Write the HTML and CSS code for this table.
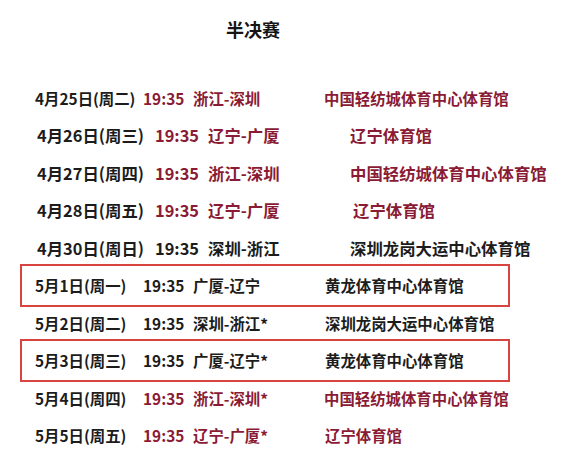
FILE: index.html
```html
<!DOCTYPE html>
<html lang="zh">
<head>
<meta charset="utf-8">
<link rel="stylesheet" href="styles.css">
</head>
<body>
<div class="page">
  <h1 class="title">半决赛</h1>
  <div class="list">
    <div class="row red"><span class="date">4月25日(周二)</span><span class="time">19:35</span><span class="teams">浙江-深圳</span><span class="venue v-r1">中国轻纺城体育中心体育馆</span></div>
    <div class="row wide red"><span class="date">4月26日(周三)</span><span class="time">19:35</span><span class="teams">辽宁-广厦</span><span class="venue">辽宁体育馆</span></div>
    <div class="row wide red"><span class="date">4月27日(周四)</span><span class="time">19:35</span><span class="teams">浙江-深圳</span><span class="venue">中国轻纺城体育中心体育馆</span></div>
    <div class="row wide red"><span class="date">4月28日(周五)</span><span class="time">19:35</span><span class="teams">辽宁-广厦</span><span class="venue v-in">辽宁体育馆</span></div>
    <div class="row wide"><span class="date">4月30日(周日)</span><span class="time">19:35</span><span class="teams">深圳-浙江</span><span class="venue">深圳龙岗大运中心体育馆</span></div>
    <div class="row boxed"><span class="date">5月1日(周一)</span><span class="time">19:35</span><span class="teams">广厦-辽宁</span><span class="venue">黄龙体育中心体育馆</span></div>
    <div class="row"><span class="date">5月2日(周二)</span><span class="time">19:35</span><span class="teams">深圳-浙江*</span><span class="venue">深圳龙岗大运中心体育馆</span></div>
    <div class="row boxed"><span class="date">5月3日(周三)</span><span class="time">19:35</span><span class="teams">广厦-辽宁*</span><span class="venue">黄龙体育中心体育馆</span></div>
    <div class="row red"><span class="date">5月4日(周四)</span><span class="time">19:35</span><span class="teams">浙江-深圳*</span><span class="venue v-r1">中国轻纺城体育中心体育馆</span></div>
    <div class="row red"><span class="date">5月5日(周五)</span><span class="time">19:35</span><span class="teams">辽宁-广厦*</span><span class="venue">辽宁体育馆</span></div>
  </div>
</div>
</body>
</html>
```

FILE: styles.css
```css
html, body {
  margin: 0;
  padding: 0;
  background: #ffffff;
}

.page {
  width: 563px;
  height: 467px;
  overflow: hidden;
  font-family: "Noto Sans CJK SC", "Noto Sans", sans-serif;
  font-weight: 700;
  color: #1c1c1c;
}

.title {
  margin: 17px 0 0 0;
  width: 506px;
  text-align: center;
  font-size: 18px;
  line-height: 24px;
  font-weight: 700;
  color: #151515;
}

.list {
  margin-top: 38px;
  display: flex;
  flex-direction: column;
}

.row {
  position: relative;
  height: 37.5px;
  margin-left: 20px;
  width: 490px;
  display: flex;
  align-items: center;
  padding-left: 15px;
  box-sizing: border-box;
  white-space: nowrap;
  font-size: 15.4px;
}

.row span { flex: none; }

.row .date { width: 108px; color: #1c1c1c; }
.row .time { width: 50px; }
.row .teams { width: 132px; }
.row .venue.v-r1 { margin-left: -1px; }

.row.wide {
  padding-left: 17px;
  font-size: 16.4px;
}
.row.wide .date { width: 118px; }
.row.wide .time { width: 53px; }
.row.wide .teams { width: 142px; }
.row.wide .venue.v-in { margin-left: 3px; }

.red .time, .red .teams, .red .venue { color: #8a1b35; }

.boxed::before {
  content: "";
  position: absolute;
  left: 0;
  right: 0;
  top: -3px;
  bottom: -3px;
  border: 2px solid #d8443f;
  pointer-events: none;
}
```
